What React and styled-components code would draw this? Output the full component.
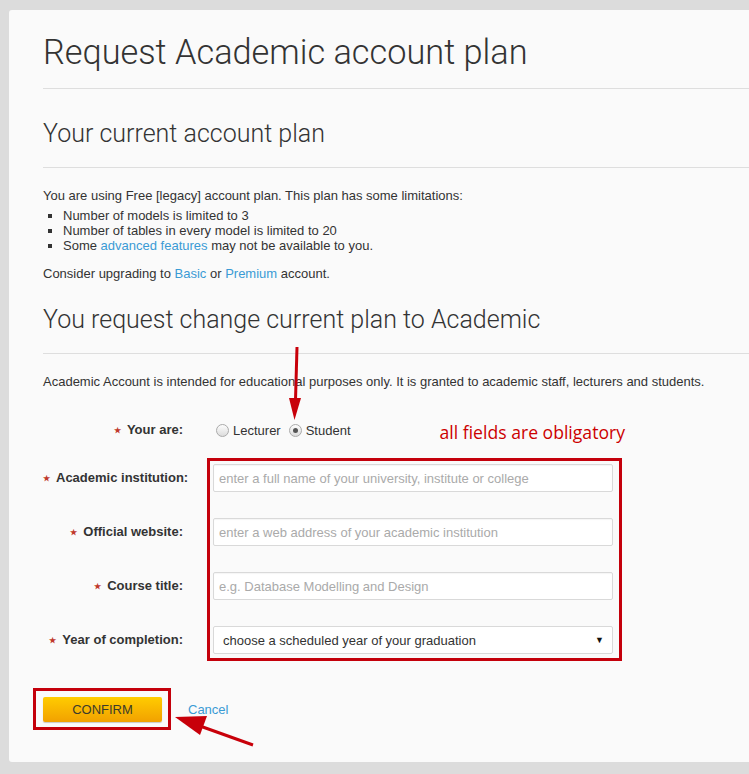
import React from "react";
import styled, { createGlobalStyle } from "styled-components";

const Global = createGlobalStyle`
  html, body { margin: 0; padding: 0; background: #dcdcdc; overflow: hidden; }
  body { font-family: "Liberation Sans", Arial, sans-serif; }
`;

const Page = styled.div`
  position: relative;
  width: 749px;
  height: 774px;
  padding: 10px 0 0 9px;
  box-sizing: border-box;
`;

const Card = styled.div`
  width: 780px;
  background: #fafafa;
  border-radius: 3px;
  padding: 22px 0 32px 34px;
  box-sizing: border-box;
  color: #333;
  font-size: 13px;
`;

const Title = styled.h1`
  margin: 0;
  font-family: Roboto, sans-serif;
  font-weight: 300;
  font-size: 34.3px;
  line-height: 40px;
  color: #333;
`;

const Rule = styled.hr`
  border: 0;
  border-top: 1px solid #dedede;
  margin: ${(p) => p.$m || "0"};
`;

const Heading = styled.h2`
  margin: ${(p) => p.$m || "0"};
  font-family: Roboto, sans-serif;
  font-weight: 300;
  font-size: 25px;
  line-height: 30px;
  color: #333;
`;

const Para = styled.p`
  margin: ${(p) => p.$m || "0"};
  line-height: 15px;
`;

const List = styled.ul`
  margin: 5px 0 0;
  padding-left: 20px;
  list-style: square;
  line-height: 15px;
`;

const Link = styled.a`
  color: #3a9bd5;
  text-decoration: none;
`;

const FormRow = styled.div`
  display: flex;
  align-items: flex-start;
  margin: ${(p) => p.$m || "0"};
`;

const LabelCol = styled.div`
  width: 140px;
  margin-right: ${(p) => p.$gap || 30}px;
  display: flex;
  flex-direction: column;
  gap: 26px;
  padding-top: ${(p) => p.$pt || 0}px;
`;

const Label = styled.div`
  height: 28px;
  line-height: 28px;
  text-align: right;
  font-weight: bold;
  white-space: nowrap;
  color: #333;
`;

const Star = styled.span`
  color: #c0392b;
  font-size: 8px;
  margin-right: 6px;
  vertical-align: 1px;
`;

const Radios = styled.div`
  display: flex;
  align-items: center;
  height: 28px;
  padding-left: 3px;
  gap: 8px;
`;

const RadioItem = styled.label`
  display: flex;
  align-items: center;
  gap: 4px;
`;

const RadioDot = styled.span`
  width: 11px;
  height: 11px;
  border-radius: 50%;
  border: 1px solid #aaa;
  background: linear-gradient(#fdfdfd, #dcdcdc);
  display: inline-flex;
  align-items: center;
  justify-content: center;
  box-sizing: content-box;
  &::after {
    content: "";
    width: 5px;
    height: 5px;
    border-radius: 50%;
    background: ${(p) => (p.$checked ? "#555" : "transparent")};
  }
`;

const Note = styled.div`
  margin-left: 89px;
  padding-top: 4px;
  font-family: "Open Sans", sans-serif;
  font-size: 17.6px;
  color: #cc0000;
`;

const HighlightBox = styled.div`
  border: 3px solid #c4000b;
  padding: 3px 6px 4px 3px;
  display: flex;
  flex-direction: column;
  gap: 26px;
  width: 400px;
`;

const Input = styled.input`
  height: 28px;
  box-sizing: border-box;
  width: 100%;
  border: 1px solid #d9d9d9;
  border-radius: 2px;
  background: #fff;
  padding: 0 5px;
  font-family: "Liberation Sans", Arial, sans-serif;
  font-size: 13px;
  color: #333;
  box-shadow: inset 0 1px 1px rgba(0,0,0,0.04);
  &::placeholder { color: #aaa; }
`;

const Select = styled.div`
  height: 26px;
  border: 1px solid #d9d9d9;
  border-radius: 2px;
  background: #fff;
  display: flex;
  align-items: center;
  justify-content: space-between;
  padding: 0 8px 0 9px;
  color: #333;
`;

const Caret = styled.span`
  font-size: 9px;
  color: #111;
`;

const Actions = styled.div`
  display: flex;
  align-items: center;
  margin: 27px 0 0 -10px;
  gap: 17px;
`;

const ButtonBox = styled.div`
  border: 3px solid #c4000b;
  padding: 6px 6px 5px 7px;
`;

const Button = styled.button`
  width: 119px;
  height: 25px;
  border: 0;
  border-radius: 2px;
  background: linear-gradient(#ffcc00, #f2a100);
  box-shadow: 0 1px 1px rgba(0,0,0,0.2);
  font-family: "Liberation Sans", Arial, sans-serif;
  font-size: 13px;
  color: #3b3b2b;
  display: block;
`;

const Overlay = styled.svg`
  position: absolute;
  left: 0;
  top: 0;
  pointer-events: none;
`;

export default function App() {
  return (
    <>
      <Global />
      <Page>
        <Card>
          <Title>Request Academic account plan</Title>
          <Rule $m="16px 0 0" />
          <Heading $m="30px 0 0">Your current account plan</Heading>
          <Rule $m="18px 0 0" />
          <Para $m="20px 0 0">
            You are using Free [legacy] account plan. This plan has some limitations:
          </Para>
          <List>
            <li>Number of models is limited to 3</li>
            <li>Number of tables in every model is limited to 20</li>
            <li>
              Some <Link href="#">advanced features</Link> may not be available to you.
            </li>
          </List>
          <Para $m="13px 0 0">
            Consider upgrading to <Link href="#">Basic</Link> or{" "}
            <Link href="#">Premium</Link> account.
          </Para>
          <Heading $m="24px 0 0">You request change current plan to Academic</Heading>
          <Rule $m="18px 0 0" />
          <Para $m="20px 0 0">
            Academic Account is intended for educational purposes only. It is granted to academic staff, lecturers and students.
          </Para>

          <FormRow $m="27px 0 0">
            <LabelCol>
              <Label><Star>★</Star>Your are:</Label>
            </LabelCol>
            <Radios>
              <RadioItem><RadioDot />Lecturer</RadioItem>
              <RadioItem><RadioDot $checked />Student</RadioItem>
            </Radios>
            <Note>all fields are obligatory</Note>
          </FormRow>

          <FormRow $m="14px 0 0">
            <LabelCol $gap={24} $pt={6}>
              <Label><Star>★</Star>Academic institution:</Label>
              <Label><Star>★</Star>Official website:</Label>
              <Label><Star>★</Star>Course title:</Label>
              <Label><Star>★</Star>Year of completion:</Label>
            </LabelCol>
            <HighlightBox>
              <Input placeholder="enter a full name of your university, institute or college" />
              <Input placeholder="enter a web address of your academic institution" />
              <Input placeholder="e.g. Database Modelling and Design" />
              <Select>
                <span>choose a scheduled year of your graduation</span>
                <Caret>▼</Caret>
              </Select>
            </HighlightBox>
          </FormRow>

          <Actions>
            <ButtonBox>
              <Button>CONFIRM</Button>
            </ButtonBox>
            <Link href="#">Cancel</Link>
          </Actions>
        </Card>
        <Overlay width="749" height="774" viewBox="0 0 749 774">
          <line x1="297" y1="347" x2="295.5" y2="400" stroke="#c8000a" strokeWidth="3" />
          <polygon points="289,398 301,398 294.5,420" fill="#c8000a" />
          <line x1="253" y1="745" x2="200" y2="726" stroke="#c8000a" strokeWidth="3" />
          <polygon points="175,717 207,716 200,735" fill="#c8000a" />
        </Overlay>
      </Page>
    </>
  );
}
